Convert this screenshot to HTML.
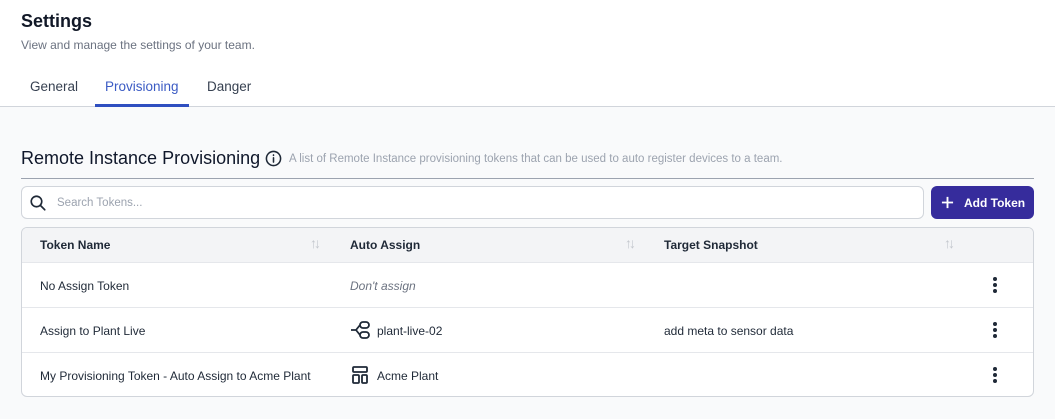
<!DOCTYPE html>
<html><head><meta charset="utf-8"><style>
*{box-sizing:border-box;margin:0;padding:0}
body{width:1055px;height:419px;overflow:hidden;font-family:"Liberation Sans",sans-serif;background:#f9fafb;color:#1f2937;position:relative}
.top{position:absolute;left:0;top:0;width:1055px;height:107px;background:#fff;border-bottom:1px solid #d1d5db}
.abs{position:absolute;white-space:nowrap}
h1{font-size:18px;font-weight:bold;color:#111827}
.tab{font-size:13.5px;color:#374151}
.th{font-size:12px;font-weight:bold;color:#1f2937}
.td{font-size:12px;color:#1f2937}
.row{position:absolute;left:0;width:100%;border-top:1px solid #e5e7eb}
.sort{position:absolute;font-size:14px;color:#c4c8ce;letter-spacing:-3px}
.kebab{position:absolute;left:991px;width:4px}
.kebab i{display:block;width:4px;height:4px;border-radius:2px;background:#1f2937;margin-bottom:2px}
</style></head><body>
<div class="top">
<h1 class="abs" style="left:21px;top:11px">Settings</h1>
<div class="abs" style="left:21px;top:38px;font-size:12px;color:#6b7280">View and manage the settings of your team.</div>
<div class="abs tab" style="left:30px;top:79px">General</div>
<div class="abs tab" style="left:105px;top:79px;color:#3b5bc4">Provisioning</div>
<div class="abs tab" style="left:207px;top:79px">Danger</div>
<div class="abs" style="left:95px;top:104px;width:94px;height:3px;background:#2f4fc0"></div>
</div>
<div class="abs" style="left:21px;top:148px;font-size:18px;color:#0f172a">Remote Instance Provisioning</div>
<svg class="abs" style="left:265px;top:150px" width="17" height="17" viewBox="0 0 24 24" fill="none" stroke="#1f2937" stroke-width="2.2"><circle cx="12" cy="12" r="10"/><path d="M12 11v6M12 7v.5" stroke-linecap="round"/></svg>
<div class="abs" style="left:289px;top:153px;font-size:11.5px;color:#9ca3af">A list of Remote Instance provisioning tokens that can be used to auto register devices to a team.</div>
<div class="abs" style="left:21px;top:178px;width:1013px;height:1px;background:#9ca3af"></div>
<div class="abs" style="left:21px;top:186px;width:903px;height:33px;background:#fff;border:1px solid #d1d5db;border-radius:6px"></div>
<svg class="abs" style="left:29px;top:194px" width="18" height="18" viewBox="0 0 24 24" fill="none" stroke="#1f2937" stroke-width="2.2"><circle cx="10" cy="10" r="7"/><path d="M15 15l6 6" stroke-linecap="round"/></svg>
<div class="abs" style="left:57px;top:197px;font-size:11.5px;color:#9ca3af">Search Tokens...</div>
<div class="abs" style="left:931px;top:186px;width:103px;height:33px;background:#362c9c;border-radius:6px;color:#fff;font-size:12px;font-weight:bold;padding:10px 0 0 33px">Add Token</div>
<svg class="abs" style="left:941px;top:196px" width="13" height="13" viewBox="0 0 14 14" stroke="#fff" stroke-width="2"><path d="M7 1v12M1 7h12"/></svg>
<div class="abs" style="left:21px;top:227px;width:1013px;height:170px;background:#fff;border:1px solid #d1d5db;border-radius:6px;overflow:hidden">
<div style="position:absolute;left:0;top:0;width:100%;height:34px;background:#f3f4f6"></div>
<div class="abs th" style="left:18px;top:10px">Token Name</div>
<div class="abs th" style="left:328px;top:10px">Auto Assign</div>
<div class="abs th" style="left:642px;top:10px">Target Snapshot</div>
<div class="sort" style="left:288px;top:7px">↑↓</div>
<div class="sort" style="left:603px;top:7px">↑↓</div>
<div class="sort" style="left:922px;top:7px">↑↓</div>
<div class="row" style="top:34px;height:45px">
<div class="abs td" style="left:18px;top:16px">No Assign Token</div>
<div class="abs td" style="left:328px;top:16px;font-style:italic;color:#6b7280">Don't assign</div>
<div class="kebab" style="left:971px;top:14px"><i></i><i></i><i></i></div>
</div>
<div class="row" style="top:79px;height:45px">
<div class="abs td" style="left:18px;top:16px">Assign to Plant Live</div>
<svg class="abs" style="left:328px;top:13px" width="20" height="18" viewBox="0 0 20 18" fill="none" stroke="#1f2937" stroke-width="1.8"><path d="M1 9h5l4-5M6 9l4 5"/><rect x="10" y="1" width="9" height="6" rx="3"/><rect x="10" y="11" width="9" height="6" rx="3"/></svg>
<div class="abs td" style="left:355px;top:16px">plant-live-02</div>
<div class="abs td" style="left:642px;top:16px">add meta to sensor data</div>
<div class="kebab" style="left:971px;top:14px"><i></i><i></i><i></i></div>
</div>
<div class="row" style="top:124px;height:46px">
<div class="abs td" style="left:18px;top:16px">My Provisioning Token - Auto Assign to Acme Plant</div>
<svg class="abs" style="left:330px;top:13px" width="16" height="18" viewBox="0 0 16 18" fill="none" stroke="#1f2937" stroke-width="1.8"><rect x="1" y="1" width="14" height="5" rx="1"/><rect x="1" y="9" width="6" height="8" rx="1"/><rect x="10" y="9" width="5" height="8" rx="1"/></svg>
<div class="abs td" style="left:355px;top:16px">Acme Plant</div>
<div class="kebab" style="left:971px;top:14px"><i></i><i></i><i></i></div>
</div>
</div>
</body></html>
